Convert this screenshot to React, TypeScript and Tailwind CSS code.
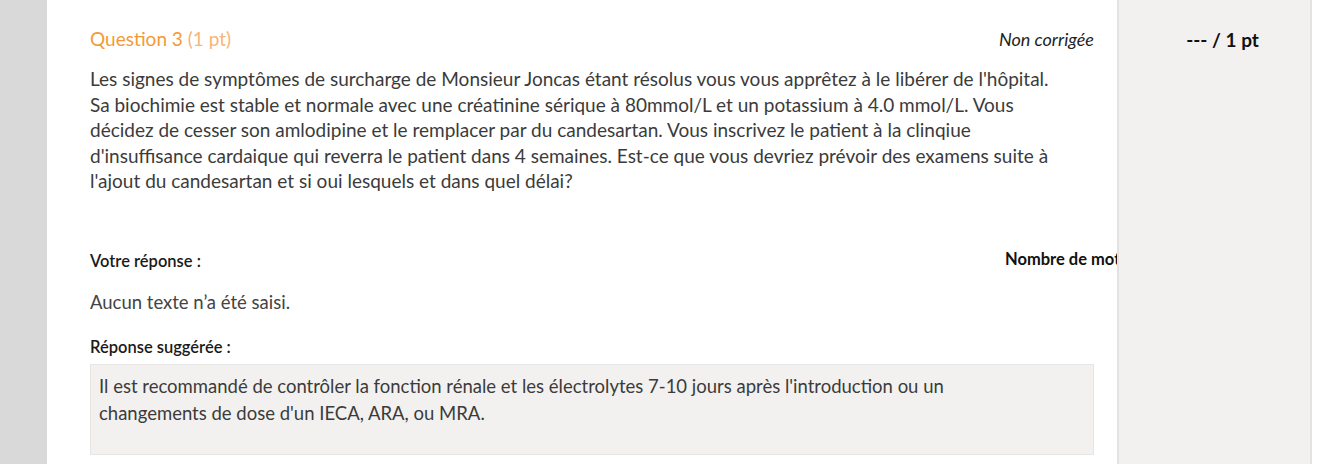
export default function App() {
  const lines = [
    "Les signes de symptômes de surcharge de Monsieur Joncas étant résolus vous vous apprêtez à le libérer de l'hôpital.",
    'Sa biochimie est stable et normale avec une créatinine sérique à 80mmol/L et un potassium à 4.0 mmol/L. Vous',
    "décidez de cesser son amlodipine et le remplacer par du candesartan. Vous inscrivez le patient à la clinqiue",
    "d'insuffisance cardaique qui reverra le patient dans 4 semaines. Est-ce que vous devriez prévoir des examens suite à",
    "l'ajout du candesartan et si oui lesquels et dans quel délai?",
  ]

  return (
    <div className="flex h-[464px] w-[1334px] overflow-hidden bg-white font-['Lato',sans-serif]">
      <div className="w-[47px] shrink-0 bg-[#d9d9d9]" />

      <div className="w-[1070px] shrink-0 overflow-hidden pl-[43px] pr-[23px]">
        <div className="mt-[27px] flex items-center justify-between leading-[24px]">
          <div className="text-[19px]">
            <span className="text-[#f39a37]">Question 3</span>{' '}
            <span className="text-[#f6b676]">(1 pt)</span>
          </div>
          <span className="text-[18px] italic text-[#1f1f1f]">Non corrigée</span>
        </div>

        <div className="mt-[15px] text-[19px] leading-[25.5px] text-[#3b3b3b]">
          {lines.map((l) => (
            <div key={l} className="whitespace-nowrap">{l}</div>
          ))}
        </div>

        <div className="relative mt-[56px] flex leading-[22px]">
          <span className="text-[16.5px] font-semibold text-[#1a1a1a]">Votre réponse :</span>
          <span className="absolute left-[915px] top-[-2px] whitespace-nowrap text-[16.5px] font-bold text-[#111]">
            Nombre de mots
          </span>
        </div>

        <div className="mt-[18px] text-[18.5px] leading-[24px] text-[#444]">Aucun texte n’a été saisi.</div>

        <div className="mt-[22px] text-[16.5px] font-semibold leading-[22px] text-[#1a1a1a]">Réponse suggérée :</div>

        <div className="mt-[6px] h-[91px] border border-[#e6e5e4] bg-[#f2f1f0] px-[8px] pt-[8px] text-[18.5px] leading-[27px] text-[#3b3b3b]">
          <div className="whitespace-nowrap">
            Il est recommandé de contrôler la fonction rénale et les électrolytes 7-10 jours après l'introduction ou un
          </div>
          <div className="whitespace-nowrap">changements de dose d'un IECA, ARA, ou MRA.</div>
        </div>
      </div>

      <div className="w-[195px] shrink-0 border-x-2 border-[#e4e3e2] bg-[#f2f1f0] pl-[16px] pt-[28px] text-center">
        <span className="text-[19px] font-bold leading-[24px] text-[#111]">--- / 1 pt</span>
      </div>

      <div className="flex-1 bg-white" />
    </div>
  )
}
